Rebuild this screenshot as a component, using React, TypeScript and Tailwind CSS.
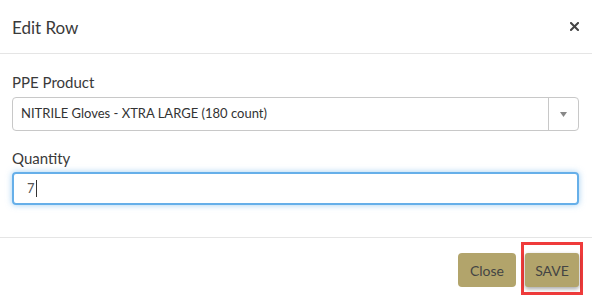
export default function App() {
  return (
    <div className="w-[592px] h-[300px] bg-white text-[#333] overflow-hidden" style={{ fontFamily: 'Lato, "Liberation Sans", sans-serif' }}>
      {/* header */}
      <div className="h-[54px] border-b border-[#e5e5e5] flex items-center justify-between pl-[12px] pr-[13px]">
        <h4 className="text-[17px] leading-none text-[#3a3a3a] mt-[1px]">Edit Row</h4>
        <button className="text-[#444] leading-none -mt-[1px]">
          <svg width="9" height="9" viewBox="0 0 9 9" className="block">
            <path d="M1 1 L8 8 M8 1 L1 8" stroke="currentColor" strokeWidth="2" strokeLinecap="square" />
          </svg>
        </button>
      </div>

      {/* body */}
      <div className="px-[12px] pt-[18px] h-[183px]">
        <label className="block text-[15px] leading-[20px] text-[#3a3a3a]">PPE Product</label>
        <div className="mt-[5px] h-[34px] flex border border-[#c8c8c8] rounded-[4px] mr-[1px]">
          <div className="flex-1 flex items-center pl-[8px] text-[13px] text-[#333]">
            NITRILE Gloves - XTRA LARGE (180 count)
          </div>
          <div className="w-[30px] border-l border-[#c8c8c8] flex items-center justify-center">
            <svg width="7" height="5" viewBox="0 0 7 5">
              <path d="M0 0 L7 0 L3.5 5 Z" fill="#888" />
            </svg>
          </div>
        </div>
        <label className="block mt-[17px] text-[15px] leading-[20px] text-[#3a3a3a]">Quantity</label>
        <div className="mt-[4px] h-[33px] mr-[1px] flex items-center pl-[13px] border-2 border-[#66afe9] rounded-[4px] shadow-[0_0_6px_rgba(102,175,233,0.6)] text-[13px] text-[#555]">
          7<span className="inline-block w-px h-[17px] bg-[#333] ml-[1px]" />
        </div>
      </div>

      {/* footer */}
      <div className="border-t border-[#e5e5e5] flex justify-end items-start gap-[5px] pt-[15px] pr-[12px]">
        <button className="h-[34px] w-[58px] rounded-[4px] bg-[#b2a46b] text-[14px] text-[#444]">Close</button>
        <div className="-mt-[11px] -mr-[3px] border-[3px] border-[#ef3b3b] pt-[8px] pb-[5px] px-[1px]">
          <button className="h-[34px] w-[54px] rounded-[3px] bg-[#b2a46b] text-[14px] text-[#444] shadow-[0_2px_4px_rgba(0,0,0,0.35)]">SAVE</button>
        </div>
      </div>
    </div>
  );
}
